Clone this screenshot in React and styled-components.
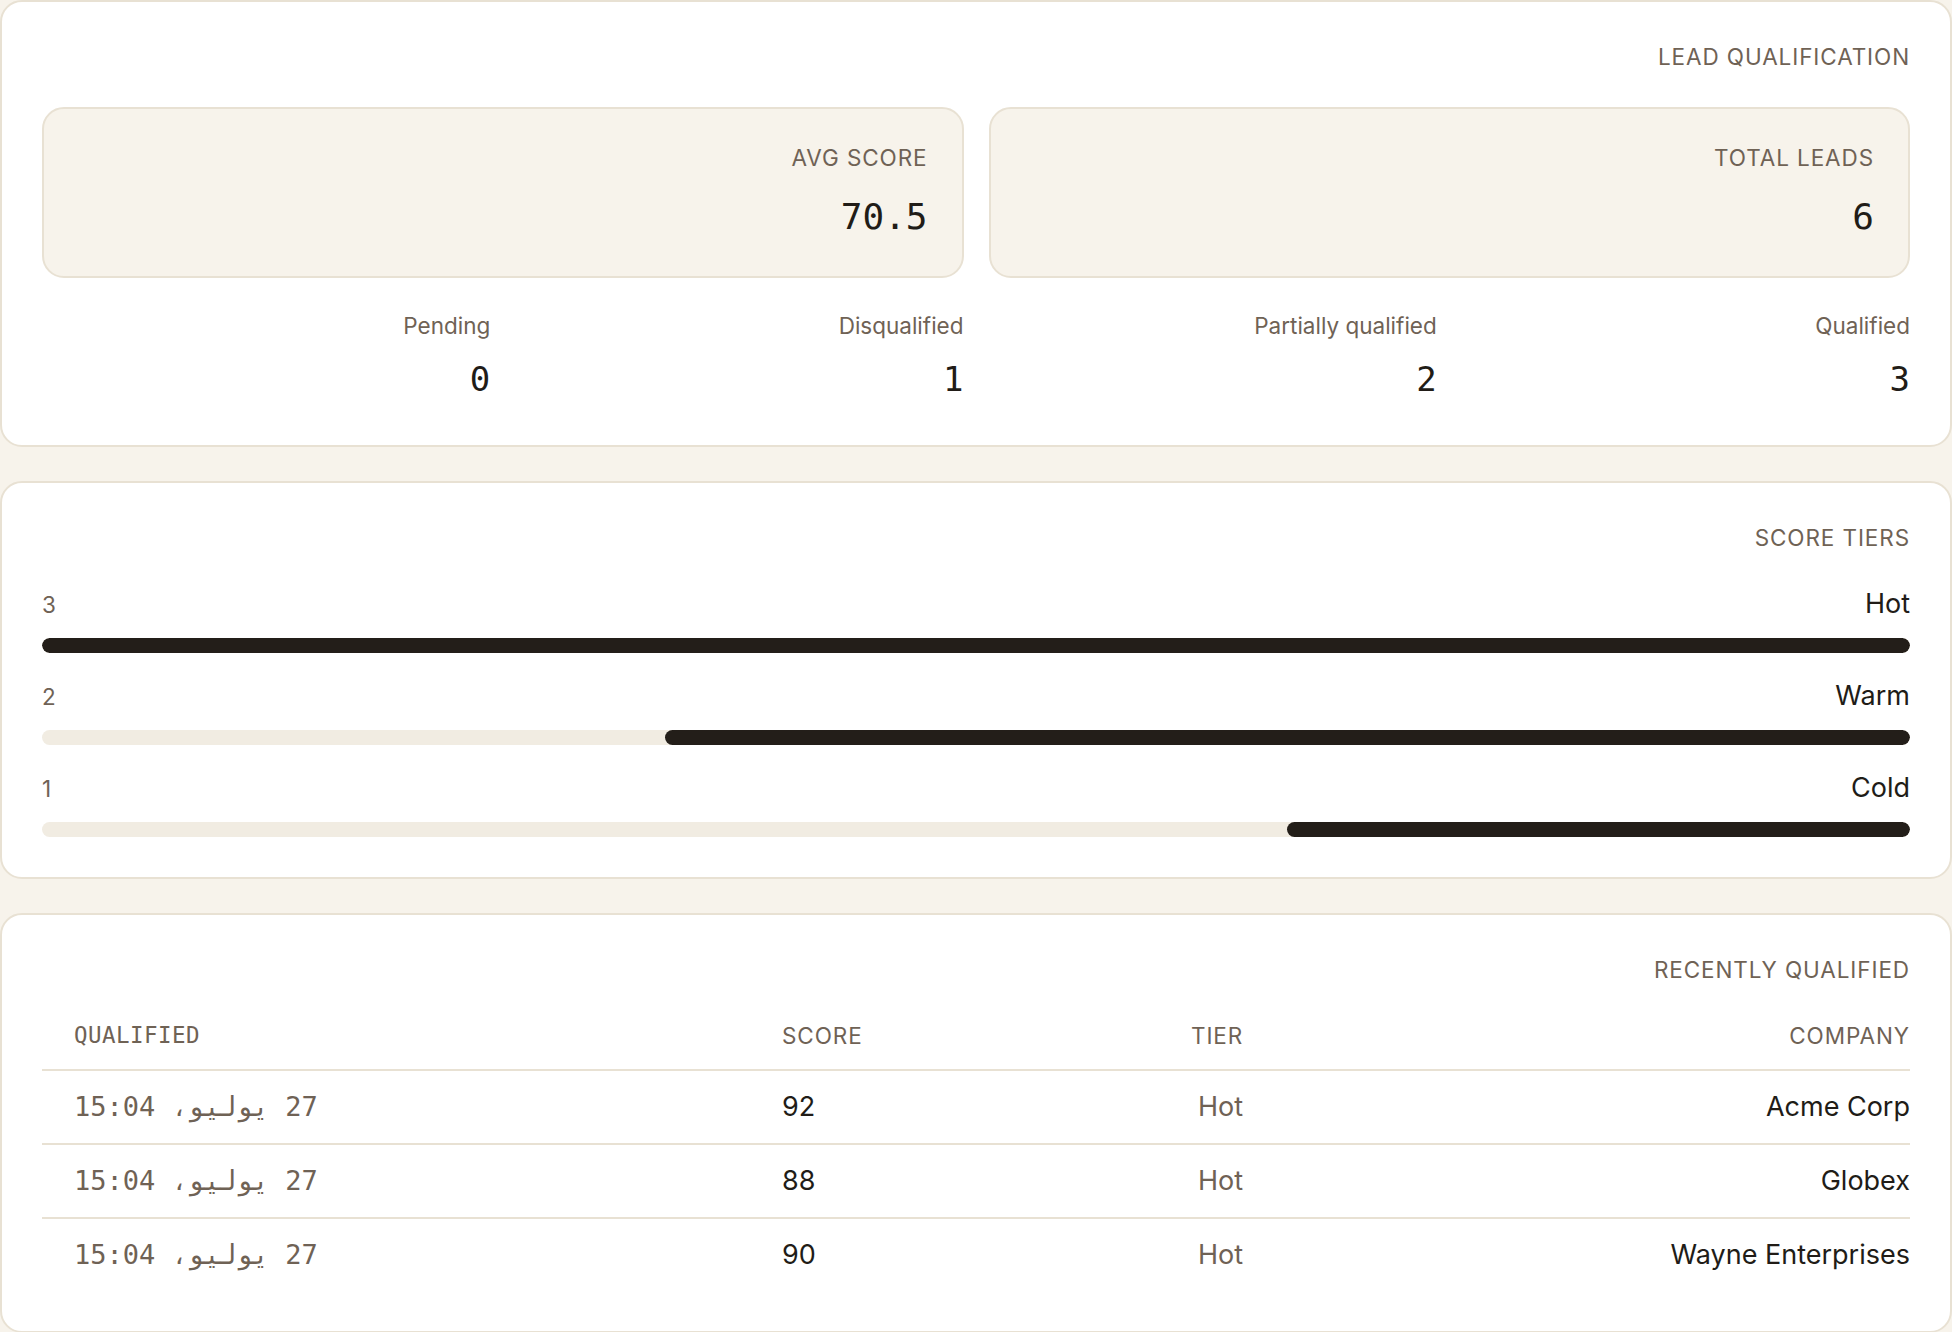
import React from "react";
import styled, { createGlobalStyle } from "styled-components";

const GlobalStyle = createGlobalStyle`
  *, *::before, *::after { box-sizing: border-box; }
  html, body { margin: 0; padding: 0; background: #f7f3eb; }
  body {
    font-family: Inter, "Noto Sans", sans-serif;
    color: #211c17;
    -webkit-font-smoothing: antialiased;
  }
`;

const mono = `"DejaVu Sans Mono", "Liberation Mono", monospace`;
const muted = "#6f6255";
const line = "#e8e1d3";

const Page = styled.main`
  direction: rtl;
  display: flex;
  flex-direction: column;
  gap: 34px;
`;

const Panel = styled.section`
  background: #ffffff;
  border: 2px solid ${line};
  border-radius: 22px;
  padding: 38px 40px 40px;
`;

const Title = styled.h2`
  margin: 0 0 ${({ $mb }) => $mb}px;
  font-size: 22.5px;
  line-height: 1.5;
  font-weight: 400;
  letter-spacing: 0.04em;
  text-transform: uppercase;
  color: ${muted};
`;

// lead qualification ==========
const CardGrid = styled.div`
  display: grid;
  grid-template-columns: 1fr 1fr;
  gap: 25px;
`;

const Card = styled.div`
  background: #f7f3eb;
  border: 2px solid ${line};
  border-radius: 22px;
  padding: 32px 34px 34px;
`;

const Label = styled.div`
  font-size: 22.5px;
  line-height: 1.5;
  color: ${muted};
  letter-spacing: ${({ $caps }) => ($caps ? "0.04em" : "0")};
  text-transform: ${({ $caps }) => ($caps ? "uppercase" : "none")};
`;

const Value = styled.div`
  margin-top: ${({ $gap }) => $gap}px;
  font-family: ${mono};
  font-size: ${({ $size }) => $size}px;
  line-height: 51px;
  color: #211c17;
`;

const StatusGrid = styled.div`
  display: grid;
  grid-template-columns: repeat(4, 1fr);
  gap: 25px;
  margin-top: 31px;
`;

// score tiers ==========
const TierList = styled.div`
  display: flex;
  flex-direction: column;
  gap: 23px;
`;

const TierHead = styled.div`
  display: flex;
  justify-content: space-between;
  align-items: baseline;
`;

const TierName = styled.span`
  font-size: 27px;
  line-height: 40.5px;
  color: #211c17;
`;

const TierCount = styled.span`
  font-size: 22.5px;
  color: ${muted};
`;

const Track = styled.div`
  margin-top: 13.5px;
  height: 15px;
  border-radius: 8px;
  background: #f1ece2;
  display: flex;
  overflow: hidden;
`;

const Fill = styled.div`
  height: 100%;
  border-radius: 8px;
  background: #231e19;
`;

// recently qualified ==========
const Table = styled.table`
  width: 100%;
  border-collapse: collapse;
  table-layout: fixed;
`;

const Th = styled.th`
  padding: 16px 0 16px 32px;
  font-family: ${({ $mono }) => ($mono ? mono : "inherit")};
  font-size: 22.5px;
  line-height: 1.5;
  font-weight: 400;
  letter-spacing: ${({ $mono }) => ($mono ? "0.02em" : "0.04em")};
  text-transform: uppercase;
  color: ${muted};
  text-align: ${({ $align }) => $align};
  border-bottom: 2px solid ${line};
`;

const Row = styled.tr`
  & + & td {
    border-top: 2px solid ${line};
  }
`;

const Td = styled.td`
  padding: 16px 0 16px 32px;
  font-family: ${({ $mono }) => ($mono ? mono : "inherit")};
  font-size: 27px;
  line-height: 40px;
  color: ${({ $muted }) => ($muted ? muted : "#211c17")};
  text-align: ${({ $align }) => $align};
  white-space: nowrap;
`;

const cards = [
  { label: "Total leads", value: "6" },
  { label: "Avg score", value: "70.5" },
];

const statuses = [
  { label: "Qualified", value: 3 },
  { label: "Partially qualified", value: 2 },
  { label: "Disqualified", value: 1 },
  { label: "Pending", value: 0 },
];

const tiers = [
  { name: "Hot", count: 3 },
  { name: "Warm", count: 2 },
  { name: "Cold", count: 1 },
];

const leads = [
  { company: "Acme Corp", tier: "Hot", score: 92, at: "27 يوليو، 15:04" },
  { company: "Globex", tier: "Hot", score: 88, at: "27 يوليو، 15:04" },
  { company: "Wayne Enterprises", tier: "Hot", score: 90, at: "27 يوليو، 15:04" },
];

export default function App() {
  const max = Math.max(...tiers.map((t) => t.count));

  return (
    <>
      <GlobalStyle />
      <Page>
        <Panel>
          <Title $mb={33}>Lead qualification</Title>
          <CardGrid>
            {cards.map((c) => (
              <Card key={c.label}>
                <Label $caps>{c.label}</Label>
                <Value $gap={16} $size={36}>{c.value}</Value>
              </Card>
            ))}
          </CardGrid>
          <StatusGrid>
            {statuses.map((s) => (
              <div key={s.label}>
                <Label>{s.label}</Label>
                <Value $gap={12} $size={34}>{s.value}</Value>
              </div>
            ))}
          </StatusGrid>
        </Panel>

        <Panel>
          <Title $mb={29}>Score tiers</Title>
          <TierList>
            {tiers.map((t) => (
              <div key={t.name}>
                <TierHead>
                  <TierName>{t.name}</TierName>
                  <TierCount>{t.count}</TierCount>
                </TierHead>
                <Track>
                  <Fill style={{ width: `${(t.count / max) * 100}%` }} />
                </Track>
              </div>
            ))}
          </TierList>
        </Panel>

        <Panel>
          <Title $mb={16}>Recently qualified</Title>
          <Table>
            <colgroup>
              <col style={{ width: "35.7%" }} />
              <col style={{ width: "13.2%" }} />
              <col style={{ width: "13.2%" }} />
              <col style={{ width: "37.9%" }} />
            </colgroup>
            <thead>
              <tr>
                <Th $align="right">Company</Th>
                <Th $align="right">Tier</Th>
                <Th $align="left">Score</Th>
                <Th $align="left" $mono>Qualified</Th>
              </tr>
            </thead>
            <tbody>
              {leads.map((l) => (
                <Row key={l.company}>
                  <Td $align="right">{l.company}</Td>
                  <Td $align="right" $muted>{l.tier}</Td>
                  <Td $align="left">{l.score}</Td>
                  <Td $align="left" $mono $muted>{l.at}</Td>
                </Row>
              ))}
            </tbody>
          </Table>
        </Panel>
      </Page>
    </>
  );
}
